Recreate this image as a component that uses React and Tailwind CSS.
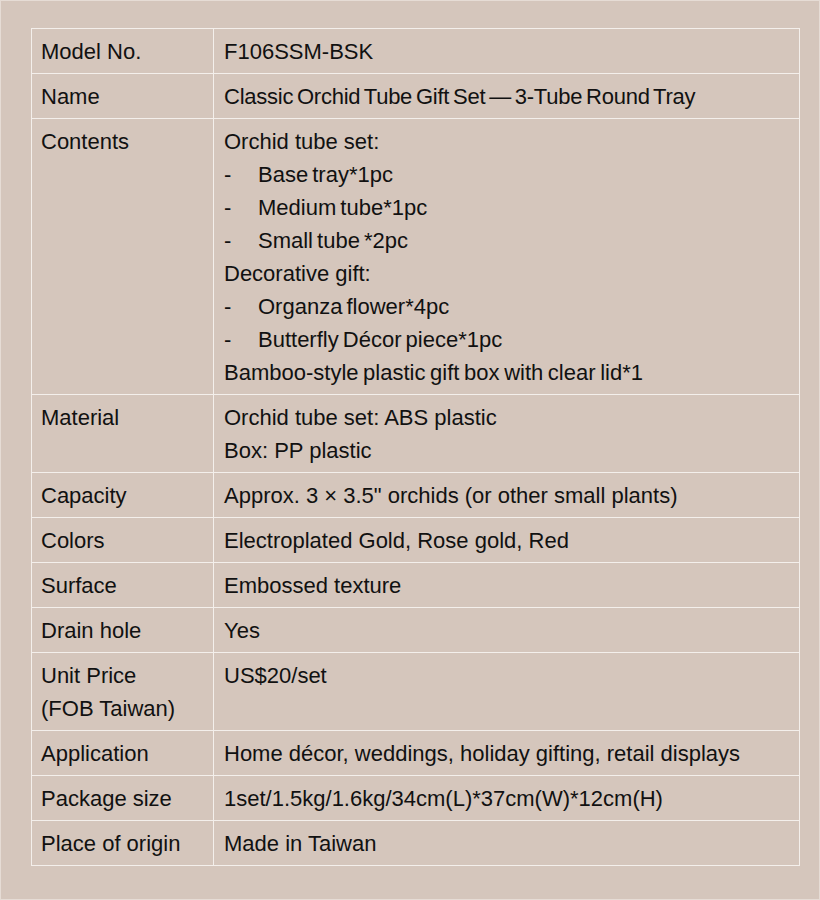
import React from "react";

const rows = [
  { label: ["Model No."], value: ["F106SSM-BSK"] },
  { label: ["Name"], value: [{ tight: "Classic Orchid Tube Gift Set — 3-Tube Round Tray" }] },
  {
    label: ["Contents"],
    value: [
      "Orchid tube set:",
      { dash: "Base tray*1pc" },
      { dash: "Medium tube*1pc" },
      { dash: "Small tube *2pc" },
      "Decorative gift:",
      { dash: "Organza flower*4pc" },
      { dash: "Butterfly Décor piece*1pc" },
      { snug: "Bamboo-style plastic gift box with clear lid*1" },
    ],
  },
  { label: ["Material"], value: ["Orchid tube set: ABS plastic", "Box: PP plastic"] },
  { label: ["Capacity"], value: ["Approx. 3 × 3.5\" orchids (or other small plants)"] },
  { label: ["Colors"], value: ["Electroplated Gold, Rose gold, Red"] },
  { label: ["Surface"], value: ["Embossed texture"] },
  { label: ["Drain hole"], value: ["Yes"] },
  { label: ["Unit Price", "(FOB Taiwan)"], value: ["US$20/set"] },
  { label: ["Application"], value: ["Home décor, weddings, holiday gifting, retail displays"] },
  { label: ["Package size"], value: ["1set/1.5kg/1.6kg/34cm(L)*37cm(W)*12cm(H)"] },
  { label: ["Place of origin"], value: ["Made in Taiwan"] },
];

function Line({ item }) {
  if (typeof item === "string") return <div>{item}</div>;
  if (item.tight) return <div className="tracking-[-0.25px] [word-spacing:-2px]">{item.tight}</div>;
  if (item.snug) return <div className="[word-spacing:-1.5px]">{item.snug}</div>;
  return (
    <div className="flex [word-spacing:-2px]">
      <span className="w-[34px] shrink-0">-</span>
      <span>{item.dash}</span>
    </div>
  );
}

export default function App() {
  return (
    <div
      className="w-[820px] h-[900px] bg-[#d5c6bc] border border-[#e6dcd5] pt-[27px] pl-[30px] text-[#111] text-[22px] leading-[33px]"
      style={{ fontFamily: '"Liberation Sans", Arial, sans-serif' }}
    >
      <table className="w-[769px] border-collapse">
        <tbody>
          {rows.map((r, i) => (
            <tr key={i}>
              <td className="w-[182px] border border-[#f4efeb] align-top pl-[9px] pr-2 pt-[6px] pb-[5px]">
                {r.label.map((l, j) => (
                  <div key={j}>{l}</div>
                ))}
              </td>
              <td className="border border-[#f4efeb] align-top pl-[10px] pr-2 pt-[6px] pb-[5px]">
                {r.value.map((v, j) => (
                  <Line key={j} item={v} />
                ))}
              </td>
            </tr>
          ))}
        </tbody>
      </table>
    </div>
  );
}
